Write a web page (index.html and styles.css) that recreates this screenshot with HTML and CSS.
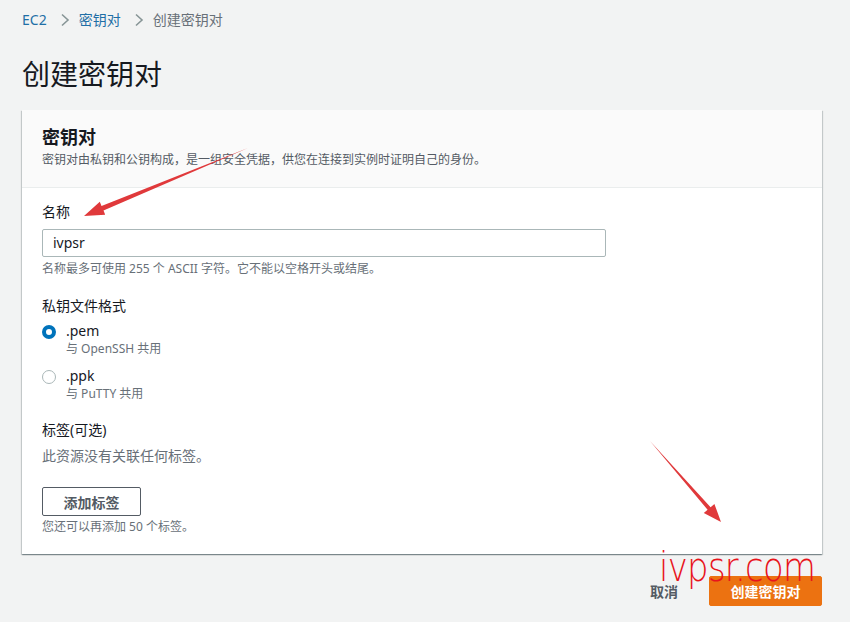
FILE: index.html
```html
<!DOCTYPE html>
<html lang="zh-CN">
<head>
  <meta charset="UTF-8">
  <title>创建密钥对</title>
  <link rel="stylesheet" href="styles.css">
</head>
<body>
  <div class="page">
    <div class="crumbs">
      <a class="crumb-link">EC2</a>
      <svg class="chev" width="10" height="14" viewBox="0 0 10 14"><path d="M2 1.5 L8 7 L2 12.5" fill="none" stroke="#879596" stroke-width="1.6"/></svg>
      <a class="crumb-link">密钥对</a>
      <svg class="chev" width="10" height="14" viewBox="0 0 10 14"><path d="M2 1.5 L8 7 L2 12.5" fill="none" stroke="#879596" stroke-width="1.6"/></svg>
      <span class="crumb-here">创建密钥对</span>
    </div>

    <h1 class="title">创建密钥对</h1>

    <div class="card">
      <div class="card-head">
        <h2>密钥对</h2>
        <p class="desc">密钥对由私钥和公钥构成，是一组安全凭据，供您在连接到实例时证明自己的身份。</p>
      </div>
      <div class="card-body">
        <div class="label">名称</div>
        <div class="input">ivpsr</div>
        <div class="hint">名称最多可使用 255 个 ASCII 字符。它不能以空格开头或结尾。</div>

        <div class="label label-gap">私钥文件格式</div>
        <div class="radio-row first">
          <span class="radio checked"></span>
          <div>
            <div class="radio-text">.pem</div>
            <div class="radio-sub">与 OpenSSH 共用</div>
          </div>
        </div>
        <div class="radio-row second">
          <span class="radio"></span>
          <div>
            <div class="radio-text">.ppk</div>
            <div class="radio-sub">与 PuTTY 共用</div>
          </div>
        </div>

        <div class="label label-gap">标签(可选)</div>
        <div class="none">此资源没有关联任何标签。</div>
        <button class="btn-tag">添加标签</button>
        <div class="hint small-gap">您还可以再添加 50 个标签。</div>
      </div>
    </div>

    <div class="actions">
      <span class="cancel">取消</span>
      <button class="btn-primary">创建密钥对</button>
    </div>
  </div>

  <div class="watermark">ivpsr.com</div>

  <svg class="arrows" width="850" height="622" viewBox="0 0 850 622">
    <polygon points="248,148 103.5,210.6 105.2,214.8 84,216 99.8,201.8 101.5,206.0" fill="#e0393b"/>
    <polygon points="650,441 710.6,507.2 714.4,503.9 721,522 703.8,513.1 707.6,509.8" fill="#e0393b"/>
  </svg>
</body>
</html>
```

FILE: styles.css
```css
* {
  box-sizing: border-box;
}

body {
  margin: 0;
  background: #f2f3f3;
  font-family: "Noto Sans", "Noto Sans CJK SC", sans-serif;
  color: #16191f;
}

.page {
  padding: 10px 28px 0 22px;
}

.crumbs {
  display: flex;
  align-items: center;
  height: 20px;
  font-size: 14px;
  line-height: 20px;
}

.crumb-link {
  color: #1f6fa6;
}

.chev {
  margin: 0 9px 0 13px;
}

.crumb-here {
  color: #687078;
}

.title {
  margin: 26px 0 18px 0;
  font-size: 28px;
  line-height: 36px;
  font-weight: 400;
}

.card {
  background: #fff;
  width: 800px;
  box-shadow: 0 1px 1px rgba(0, 28, 36, 0.3), 1px 1px 1px rgba(0, 28, 36, 0.15), -1px 1px 1px rgba(0, 28, 36, 0.15);
}

.card-head {
  background: #fafafa;
  border-bottom: 1px solid #eaeded;
  padding: 15px 20px 18px 20px;
}

.card-head h2 {
  margin: 0;
  font-size: 18px;
  line-height: 24px;
  font-weight: 700;
}

.desc {
  margin: 2px 0 0 0;
  font-size: 12px;
  line-height: 18px;
  color: #545b64;
}

.card-body {
  padding: 14px 20px 18px 20px;
}

.label {
  font-size: 14px;
  line-height: 20px;
}

.label-gap {
  margin-top: 18px;
}

.input {
  margin-top: 7px;
  width: 564px;
  height: 28px;
  border: 1px solid #aab7b8;
  border-radius: 2px;
  padding: 0 10px;
  font-size: 14px;
  line-height: 26px;
}

.hint {
  margin-top: 3px;
  font-size: 12px;
  line-height: 18px;
  color: #687078;
}

.small-gap {
  margin-top: 2px;
}

.radio-row {
  display: flex;
  align-items: flex-start;
}

.radio-row.first {
  margin-top: 5px;
}

.radio-row.second {
  margin-top: 9px;
}

.radio {
  width: 14px;
  height: 14px;
  border-radius: 50%;
  border: 1px solid #aab7b8;
  margin: 4px 10px 0 0;
  flex: none;
}

.radio.checked {
  border: 4px solid #0073bb;
  background: #fff;
}

.radio-text {
  font-size: 14px;
  line-height: 20px;
}

.radio-sub {
  font-size: 12px;
  line-height: 16px;
  color: #687078;
}

.none {
  margin-top: 6px;
  font-size: 14px;
  line-height: 20px;
  color: #687078;
}

.btn-tag {
  margin-top: 21px;
  width: 99px;
  height: 29px;
  background: #fff;
  border: 1px solid #545b64;
  border-radius: 2px;
  font-family: inherit;
  font-size: 14px;
  font-weight: 700;
  color: #545b64;
  display: block;
}

.actions {
  width: 800px;
  margin-top: 22px;
  display: flex;
  justify-content: flex-end;
  align-items: center;
}

.cancel {
  font-size: 14px;
  font-weight: 700;
  color: #545b64;
  margin-right: 31px;
}

.btn-primary {
  width: 113px;
  height: 30px;
  background: #ec7211;
  border: 1px solid #ec7211;
  border-radius: 2px;
  color: #fff;
  font-family: inherit;
  font-size: 14px;
  font-weight: 700;
}

.watermark {
  position: absolute;
  left: 659px;
  top: 544px;
  font-family: "DejaVu Sans", sans-serif;
  font-size: 26px;
  font-weight: 200;
  color: #e8141c;
  transform: scale(1.3, 1.55);
  transform-origin: left top;
  letter-spacing: -0.5px;
}

.arrows {
  position: absolute;
  left: 0;
  top: 0;
  pointer-events: none;
}
```
